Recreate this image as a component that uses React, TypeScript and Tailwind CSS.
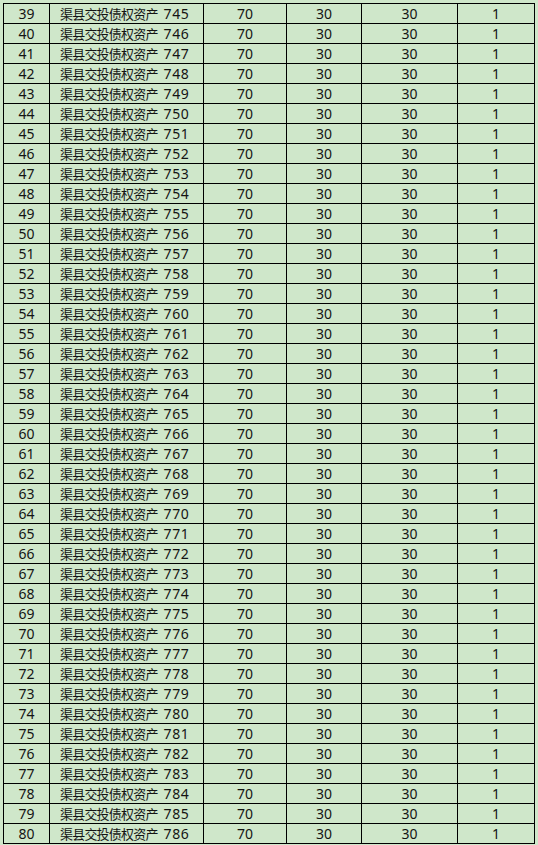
const rows = Array.from({ length: 42 }, (_, i) => ({
  no: 39 + i,
  code: 745 + i,
}));

const cell = "h-5 border-r border-b border-black flex items-center leading-none";

export default function App() {
  return (
    <div
      className="w-[538px] h-[845px] bg-[#cfe7ca] pt-[3px] pl-[3px] text-[#141414] text-[14px]"
      style={{ fontFamily: '"Noto Sans", "Noto Sans CJK SC", sans-serif' }}
    >
      <div className="grid grid-cols-[46px_154px_83px_75px_96px_77px] w-[532px] border-l border-t border-black">
        {rows.map((r) => (
          <div key={r.no} className="contents">
            <div className={`${cell} justify-center`}>{r.no}</div>
            <div className={`${cell} pl-[10px]`}>
              <span
                className="text-[13px] tracking-[-0.8px]"
                style={{ fontFamily: '"Noto Sans CJK SC", sans-serif' }}
              >
                渠县交投债权资产
              </span>
              <span className="ml-[6px] tracking-[0.6px]">{r.code}</span>
            </div>
            <div className={`${cell} justify-center`}>70</div>
            <div className={`${cell} justify-center`}>30</div>
            <div className={`${cell} justify-center`}>30</div>
            <div className={`${cell} justify-center`}>1</div>
          </div>
        ))}
      </div>
    </div>
  );
}
